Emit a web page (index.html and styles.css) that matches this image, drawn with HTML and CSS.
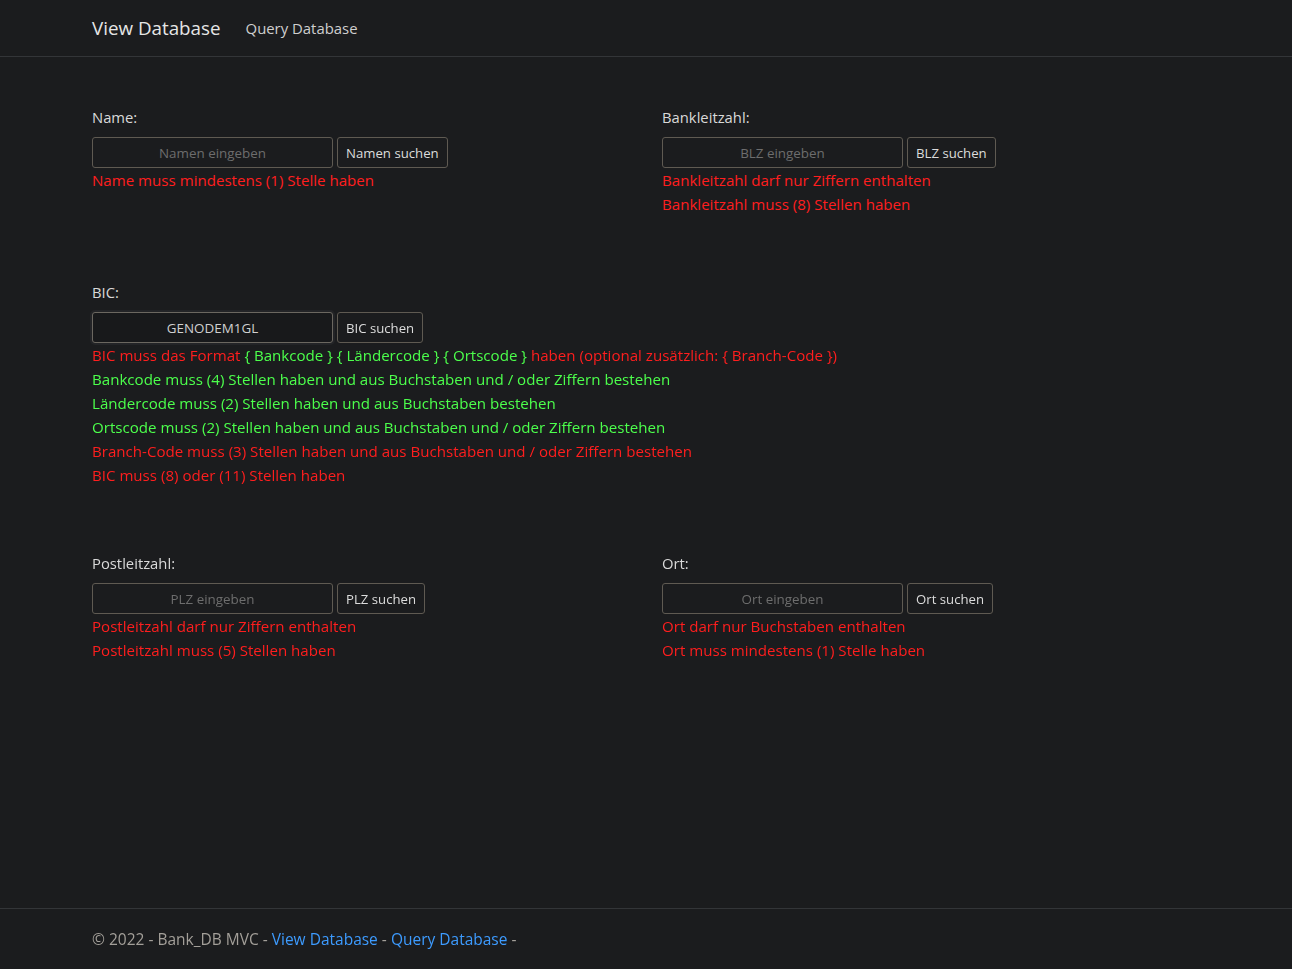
FILE: index.html
```html
<!DOCTYPE html>
<html lang="de">
<head>
<meta charset="utf-8">
<title>Query Database - Bank_DB MVC</title>
<link rel="stylesheet" href="styles.css">
</head>
<body>
<div class="page">
  <header class="navbar">
    <div class="container nav-inner">
      <a class="brand" href="#">View Database</a>
      <a class="nav-link" href="#">Query Database</a>
    </div>
  </header>

  <main class="container main">
    <div class="row">
      <div class="col">
        <label class="label">Name:</label>
        <div class="search">
          <input class="field" type="text" placeholder="Namen eingeben">
          <button class="btn">Namen suchen</button>
        </div>
        <div class="err">Name muss mindestens (1) Stelle haben</div>
      </div>
      <div class="col">
        <label class="label">Bankleitzahl:</label>
        <div class="search">
          <input class="field" type="text" placeholder="BLZ eingeben">
          <button class="btn">BLZ suchen</button>
        </div>
        <div class="err">Bankleitzahl darf nur Ziffern enthalten</div>
        <div class="err">Bankleitzahl muss (8) Stellen haben</div>
      </div>
    </div>

    <div class="row">
      <div class="col full">
        <label class="label">BIC:</label>
        <div class="search">
          <input class="field focused" type="text" value="GENODEM1GL" autofocus>
          <button class="btn">BIC suchen</button>
        </div>
        <div class="err">BIC muss das Format <span class="ok">{ Bankcode } { Ländercode } { Ortscode }</span> haben (optional zusätzlich: { Branch-Code })</div>
        <div class="ok">Bankcode muss (4) Stellen haben und aus Buchstaben und / oder Ziffern bestehen</div>
        <div class="ok">Ländercode muss (2) Stellen haben und aus Buchstaben bestehen</div>
        <div class="ok">Ortscode muss (2) Stellen haben und aus Buchstaben und / oder Ziffern bestehen</div>
        <div class="err">Branch-Code muss (3) Stellen haben und aus Buchstaben und / oder Ziffern bestehen</div>
        <div class="err">BIC muss (8) oder (11) Stellen haben</div>
      </div>
    </div>

    <div class="row">
      <div class="col">
        <label class="label">Postleitzahl:</label>
        <div class="search">
          <input class="field" type="text" placeholder="PLZ eingeben">
          <button class="btn">PLZ suchen</button>
        </div>
        <div class="err">Postleitzahl darf nur Ziffern enthalten</div>
        <div class="err">Postleitzahl muss (5) Stellen haben</div>
      </div>
      <div class="col">
        <label class="label">Ort:</label>
        <div class="search">
          <input class="field" type="text" placeholder="Ort eingeben">
          <button class="btn">Ort suchen</button>
        </div>
        <div class="err">Ort darf nur Buchstaben enthalten</div>
        <div class="err">Ort muss mindestens (1) Stelle haben</div>
      </div>
    </div>
  </main>

  <footer class="footer">
    <div class="container">
      © 2022 - Bank_DB MVC - <a href="#">View Database</a> - <a href="#">Query Database</a> -
    </div>
  </footer>
</div>
</body>
</html>
```
FILE: styles.css
```css
html, body {
  margin: 0;
  padding: 0;
}
body {
  background: #1b1c1e;
  color: #d6d6d6;
  font-family: "Open Sans", "Noto Sans", sans-serif;
  font-size: 15.1px;
  line-height: 24px;
}
.page {
  min-height: 100vh;
  display: flex;
  flex-direction: column;
}
.container {
  width: 1108px;
  margin: 0 auto;
  box-sizing: border-box;
}
.navbar {
  height: 56px;
  border-bottom: 1px solid #333538;
  box-sizing: content-box;
}
.nav-inner {
  display: flex;
  align-items: center;
  height: 56px;
}
.brand {
  color: #e6e6e6;
  text-decoration: none;
  font-size: 18.8px;
  margin-right: 25px;
}
.nav-link {
  color: #cfcfcf;
  text-decoration: none;
  font-size: 14.9px;
}
.main {
  flex: 1;
  padding-top: 48px;
}
.row {
  display: flex;
  margin-bottom: 64px;
}
.col {
  width: 570px;
  flex: none;
}
.col.full {
  width: 100%;
}
.label {
  display: block;
  margin-bottom: 8px;
  color: #d9d9d9;
  font-size: 14.8px;
}
.search {
  display: flex;
  gap: 4px;
  align-items: stretch;
}
.field {
  width: 241px;
  height: 31px;
  box-sizing: border-box;
  background: #1b1c1e;
  border: 1px solid #5f5a52;
  border-radius: 3px;
  color: #d0d0d0;
  text-align: center;
  font-family: inherit;
  font-size: 13.4px;
  padding: 0 6px;
  outline: none;
}
.field::placeholder {
  color: #6d6d6d;
}
.field.focused,
.field:focus {
  background: #18191b;
  border-color: #6b6760;
  box-shadow: 0 0 0 2px #232427;
  caret-color: #e0e0e0;
}
.btn {
  height: 31px;
  box-sizing: border-box;
  background: #1b1c1e;
  border: 1px solid #5f5a52;
  border-radius: 3px;
  color: #dcdcdc;
  font-family: inherit;
  font-size: 13.2px;
  padding: 0 8px;
}
.err {
  color: #ff1e1e;
}
.ok {
  color: #4cff4c;
}
.footer {
  border-top: 1px solid #333538;
  line-height: 60px;
  color: #a39f99;
  font-size: 15.5px;
}
.footer a {
  color: #3d9bff;
  text-decoration: none;
}
```
